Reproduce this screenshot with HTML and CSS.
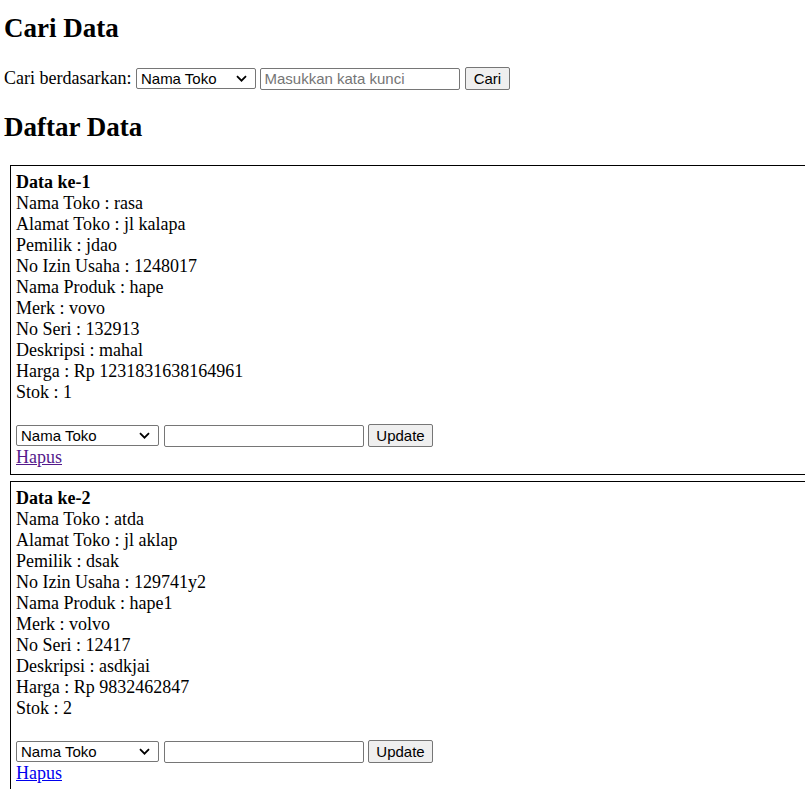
FILE: index.html
```html
<!DOCTYPE html>
<html lang="id">
<head>
<meta charset="utf-8">
<title>Cari Data</title>
<link rel="stylesheet" href="styles.css">
</head>
<body>
<h2 class="title title-first">Cari Data</h2>
<form class="search">
Cari berdasarkan: <select class="sel sel-search"><option>Nama Toko</option><option>Alamat Toko</option><option>Pemilik</option><option>Nama Produk</option></select> <input class="inp" type="text" placeholder="Masukkan kata kunci"> <button class="btn btn-cari" type="button">Cari</button>
</form>
<h2 class="title">Daftar Data</h2>
<div class="card">
<b>Data ke-1</b><br>
Nama Toko : rasa<br>
Alamat Toko : jl kalapa<br>
Pemilik : jdao<br>
No Izin Usaha : 1248017<br>
Nama Produk : hape<br>
Merk : vovo<br>
No Seri : 132913<br>
Deskripsi : mahal<br>
Harga : Rp 1231831638164961<br>
Stok : 1<br><br>
<form class="update"><select class="sel sel-card"><option>Nama Toko</option><option>No Izin Usaha</option></select> <input class="inp" type="text"> <button class="btn btn-update" type="button">Update</button></form>
<a class="link link-visited" href="#">Hapus</a>
</div>
<div class="card">
<b>Data ke-2</b><br>
Nama Toko : atda<br>
Alamat Toko : jl aklap<br>
Pemilik : dsak<br>
No Izin Usaha : 129741y2<br>
Nama Produk : hape1<br>
Merk : volvo<br>
No Seri : 12417<br>
Deskripsi : asdkjai<br>
Harga : Rp 9832462847<br>
Stok : 2<br><br>
<form class="update"><select class="sel sel-card"><option>Nama Toko</option><option>No Izin Usaha</option></select> <input class="inp" type="text"> <button class="btn btn-update" type="button">Update</button></form>
<a class="link" href="#">Hapus</a>
</div>
</body>
</html>
```
FILE: styles.css
```css
html {
  font-size: 18px;
}
body {
  margin: 0;
  padding: 0 4px;
  font-family: "Liberation Serif", "Times New Roman", serif;
  font-size: 18px;
  color: #000;
  background: #fff;
  overflow: hidden;
}
.title {
  font-size: 27px;
  font-weight: bold;
  margin: 22px 0;
}
.title-first {
  margin-top: 13px;
  margin-bottom: 23px;
}
.search {
  margin: 0;
}
.update {
  margin: 0;
}
.sel,
.inp,
.btn {
  font-family: "Liberation Sans", Arial, sans-serif;
  font-size: 15px;
  color: #000;
  box-sizing: border-box;
  vertical-align: baseline;
  margin: 0;
}
.sel {
  -webkit-appearance: none;
  appearance: none;
  height: 21px;
  border: 1px solid #767676;
  border-radius: 2px;
  padding: 0 0 0 4px;
  background-color: #fff;
  background-image: url("data:image/svg+xml,%3Csvg xmlns='http://www.w3.org/2000/svg' width='11' height='7' viewBox='0 0 11 7'%3E%3Cpath d='M1 1.2l4.5 4.5 4.5-4.5' fill='none' stroke='%23000' stroke-width='1.8'/%3E%3C/svg%3E");
  background-repeat: no-repeat;
  background-position: right 8px center;
}
.sel-search {
  width: 120px;
}
.sel-card {
  width: 143px;
}
.inp {
  width: 200px;
  height: 22px;
  border: 1px solid #767676;
  border-radius: 2px;
  padding: 1px 3px;
  background: #fff;
}
.inp::placeholder {
  color: #757575;
}
.btn {
  height: 23px;
  border: 1px solid #767676;
  border-radius: 2px;
  background: #efefef;
  padding: 0 6px;
  text-align: center;
}
.btn-cari {
  width: 45px;
}
.btn-update {
  width: 65px;
}
.card {
  border: 1px solid #000;
  padding: 6px 5px;
  margin: 6px;
  width: 100%;
}
.link {
  color: #0000ee;
  text-decoration: underline;
}
.link-visited {
  color: #551a8b;
}
```
